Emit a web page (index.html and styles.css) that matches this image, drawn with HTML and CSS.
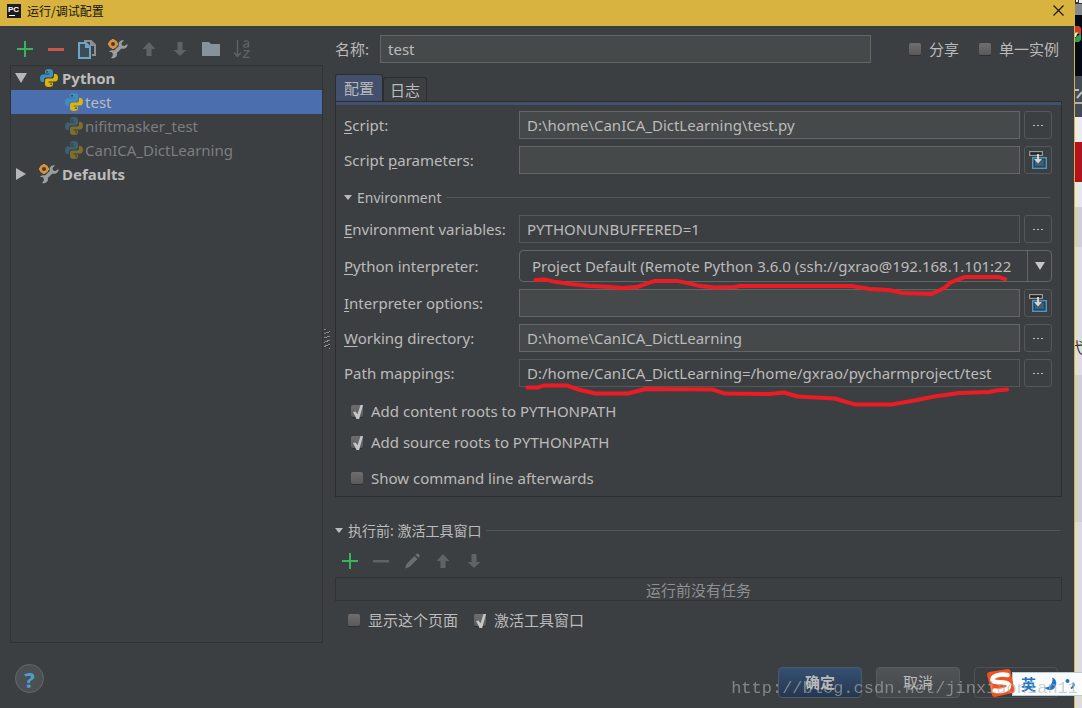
FILE: index.html
```html
<!DOCTYPE html>
<html lang="zh-CN">
<head>
<meta charset="utf-8">
<title>运行/调试配置</title>
<link rel="stylesheet" href="styles.css">
</head>
<body>
<svg class="defs" aria-hidden="true">
  <symbol id="python" viewBox="0 0 18 18">
    <path class="py-a" d="M9 0C6 0 5 1 5 2.500V4.500H9.500V5.500H3C1 5.500 0 7 0 9.300S1 13 2.500 13H4V10.800C4 9.300 5 8.500 6.500 8.500H11C12.300 8.500 13 7.500 13 6.300V2.500C13 1 12 0 9 0Z"/>
    <path class="py-b" d="M9 18C12 18 13 17 13 15.500V13.500H8.500V12.500H15C17 12.500 18 11 18 8.700S17 5 15.500 5H14V7.200C14 8.700 13 9.500 11.500 9.500H7C5.700 9.500 5 10.500 5 11.700V15.500C5 17 6 18 9 18Z"/>
    <path fill="#2b3d48" d="M6.300 2H7.800V3.500H6.300ZM10.300 14.600H11.800V16.100H10.300Z"/>
  </symbol>
  <symbol id="wrench" viewBox="0 0 20 20">
    <path fill="#9b9d9f" d="M19.500 5 16.500 7 14 6.500 13.500 4 16 1.500C13 .8 10.500 2.500 10.500 5.500L10.800 7 6 11.500C4 10.800 2 11.300 1 13L3.500 13 5 15 4.500 17 3 19C6 20 9.200 18 9 15L8.800 14 13.500 9.500C16.500 10.500 20 8.500 19.500 5Z"/>
    <circle cx="5" cy="5" r="3.300" fill="none" stroke="#d9923c" stroke-width="2.600"/>
    <path stroke="#d9923c" stroke-width="2" d="M5 0V1.500M5 8.500V10M0 5H1.500M8.500 5H10"/>
  </symbol>
  <symbol id="up" viewBox="0 0 16 16"><path fill="#606365" d="M8 1 14.500 8H10.500V15H5.500V8H1.500Z"/></symbol>
  <symbol id="down" viewBox="0 0 16 16"><path fill="#606365" d="M8 15 14.500 9H10.500V1H5.500V9H1.500Z"/></symbol>
  <symbol id="plus" viewBox="0 0 16 16"><path fill="#3bb357" d="M7 0H9V7H16V9H9V16H7V9H0V7H7Z"/></symbol>
  <symbol id="insert" viewBox="0 0 18 18">
    <rect x="3.700" y="6.700" width="13.600" height="10.600" fill="#2c4250" stroke="#4a9ac8" stroke-width="1.400"/>
    <rect x="6" y="9" width="9" height="6" fill="#3a6078"/>
    <rect x=".6" y=".6" width="12.800" height="3.800" fill="#222" stroke="#999" stroke-width="1.200"/>
    <path fill="#d4d4d4" d="M8 3H10V8H13L9 12.500 5 8H8Z"/>
  </symbol>
</svg>

<div class="screen">
  <main class="dialog">
    <header class="titlebar">
      <svg class="logo" viewBox="0 0 14 14" aria-hidden="true"><rect width="14" height="14" fill="#1c1c1c"/><text x="1" y="8" class="logo-text">PC</text><path fill="#fff" d="M2 11H8V12H2Z"/></svg>
      <h1>运行/调试配置</h1>
      <button class="close" aria-label="关闭"><svg viewBox="0 0 11 11"><path d="M.5.5 10.500 10.500M10.500.5.5 10.500" stroke="#1c1a10" stroke-width="1.200"/></svg></button>
    </header>

    <div class="content">
      <aside class="side">
        <div class="toolbar">
          <button aria-label="添加"><svg class="i16"><use href="#plus"/></svg></button>
          <button aria-label="删除"><svg class="i16" viewBox="0 0 16 16"><path fill="#cb5548" d="M0 7H16V10H0Z"/></svg></button>
          <button aria-label="复制"><svg class="i20" viewBox="0 0 20 20"><path fill="none" stroke="#8d9092" stroke-width="2" d="M7 2H14L18 6V16H15"/><path fill="#8d9092" d="M13 2V7H18Z"/><path fill="#3c4d58" stroke="#6da5c6" stroke-width="2" d="M2 4H9L13 8V19H2Z"/><path fill="#6da5c6" d="M8 4V9H13Z"/></svg></button>
          <button aria-label="编辑默认值"><svg class="i20"><use href="#wrench"/></svg></button>
          <button aria-label="上移" disabled><svg class="i16"><use href="#up"/></svg></button>
          <button aria-label="下移" disabled><svg class="i16"><use href="#down"/></svg></button>
          <button aria-label="新建文件夹"><svg class="i20" viewBox="0 0 20 20"><path fill="#87939a" d="M1 3H8L10 5H19V17H1Z"/></svg></button>
          <button aria-label="排序" disabled><svg class="i20" viewBox="0 0 20 20" fill="none" stroke="#606365" stroke-width="1.300"><path d="M5.500 1V17M2 13.500 5.500 17.500 9 13.500M12 2.800C13 1.600 16.500 1.400 16.500 3.800V8.500M16.500 5C13.500 4.800 11.600 5.300 11.600 6.800 11.600 8.900 15.500 8.500 16.500 6.500M11.500 11.700H17L11.500 18.300H17.500"/></svg></button>
        </div>
        <ul class="tree">
          <li class="node root"><svg class="arrow" viewBox="0 0 12 12"><path d="M0 1H12L6 11Z"/></svg><svg class="i18"><use href="#python"/></svg>Python</li>
          <li class="node leaf selected"><svg class="i18"><use href="#python"/></svg>test</li>
          <li class="node leaf dim"><svg class="i18"><use href="#python"/></svg>nifitmasker_test</li>
          <li class="node leaf dim"><svg class="i18"><use href="#python"/></svg>CanICA_DictLearning</li>
          <li class="node root"><svg class="arrow" viewBox="0 0 12 12"><path d="M1 0V12L11 6Z"/></svg><svg class="i20"><use href="#wrench"/></svg>Defaults</li>
        </ul>
      </aside>

      <div class="splitter"><span class="grip"></span></div>

      <section class="editor">
        <div class="namerow">
          <label for="name">名称:</label>
          <input id="name" class="field" type="text" value="test">
          <div class="flags">
            <label class="check"><input type="checkbox">分享</label>
            <label class="check"><input type="checkbox">单一实例</label>
          </div>
        </div>

        <div class="tabs" role="tablist">
          <button class="tab active" role="tab" aria-selected="true">配置</button>
          <button class="tab" role="tab" aria-selected="false">日志</button>
        </div>

        <div class="panel">
          <div class="form">
            <label for="script"><u>S</u>cript:</label>
            <input id="script" class="field" type="text" value="D:\home\CanICA_DictLearning\test.py">
            <button class="more" aria-label="浏览脚本"><i></i><i></i><i></i></button>

            <label for="params">Script <u>p</u>arameters:</label>
            <input id="params" class="field" type="text">
            <button class="more" aria-label="展开参数"><svg class="i18"><use href="#insert"/></svg></button>

            <h2 class="section env"><svg viewBox="0 0 8 6"><path d="M0 0H8L4 5Z"/></svg>Environment</h2>

            <label for="env"><u>E</u>nvironment variables:</label>
            <input id="env" class="field flat" type="text" value="PYTHONUNBUFFERED=1" readonly>
            <button class="more" aria-label="编辑环境变量"><i></i><i></i><i></i></button>

            <label for="interp"><u>P</u>ython interpreter:</label>
            <div class="combo">
              <select id="interp"><option>Project Default (Remote Python 3.6.0 (ssh://gxrao@192.168.1.101:22</option></select>
              <span class="drop"><svg viewBox="0 0 10 8"><path d="M0 0H10L5 8Z"/></svg></span>
            </div>

            <label for="opts"><u>I</u>nterpreter options:</label>
            <input id="opts" class="field" type="text">
            <button class="more" aria-label="展开选项"><svg class="i18"><use href="#insert"/></svg></button>

            <label for="wd"><u>W</u>orking directory:</label>
            <input id="wd" class="field" type="text" value="D:\home\CanICA_DictLearning">
            <button class="more" aria-label="浏览目录"><i></i><i></i><i></i></button>

            <label for="map">Path mappings:</label>
            <input id="map" class="field flat" type="text" value="D:/home/CanICA_DictLearning=/home/gxrao/pycharmproject/test" readonly>
            <button class="more" aria-label="编辑路径映射"><i></i><i></i><i></i></button>
          </div>
          <div class="options">
            <label class="check"><input type="checkbox" checked>Add content roots to PYTHONPATH</label>
            <label class="check"><input type="checkbox" checked>Add source roots to PYTHONPATH</label>
            <label class="check apart"><input type="checkbox">Show command line afterwards</label>
          </div>
          <svg class="marks" viewBox="335 101 727 396" preserveAspectRatio="none" aria-hidden="true">
            <path d="M535 280 545 279.500 556 282 570 284 590 286 610 287 622 288 637 287 645 284 654 281 678 281 688 283 700 286 715 287.500 735 287 740 286 852 286 870 289 890 290 903 293 932 294 945 288 952 282 965 277 1000 277 1006 279"/>
            <path d="M527 388 537 388 543 386 567 386 578 390 595 394 628 394 645 389.500 713 390 725 394 770 394.500 784 393 798 397 835 399 855 405 892 405 915 401 935 397 960 393.500 990 392.500 997 391 1008 390"/>
          </svg>
        </div>

        <h2 class="section before"><svg viewBox="0 0 8 6"><path d="M0 0H8L4 5Z"/></svg>执行前: 激活工具窗口</h2>
        <div class="toolbar tasks">
          <button aria-label="添加任务"><svg class="i16"><use href="#plus"/></svg></button>
          <button aria-label="删除任务" disabled><svg class="i16" viewBox="0 0 16 16"><path fill="#606365" d="M0 7H16V9.500H0Z"/></svg></button>
          <button aria-label="编辑任务" disabled><svg class="i16" viewBox="0 0 16 16"><path fill="#6b6e70" d="M1 15.500 2.500 11 10.500 3 13.500 6 5.500 14ZM11.500 2 13 .5C14.500 0 16.200 1.700 15.500 3.500L14.500 5Z"/></svg></button>
          <button aria-label="任务上移" disabled><svg class="i16"><use href="#up"/></svg></button>
          <button aria-label="任务下移" disabled><svg class="i16"><use href="#down"/></svg></button>
        </div>
        <div class="tasklist">运行前没有任务</div>
        <div class="shows">
          <label class="check"><input type="checkbox">显示这个页面</label>
          <label class="check"><input type="checkbox" checked>激活工具窗口</label>
        </div>
      </section>
    </div>

    <footer class="footer">
      <button class="help" aria-label="帮助">?</button>
      <div class="actions">
        <button class="btn primary">确定</button>
        <button class="btn">取消</button>
        <button class="btn ghost" aria-label="应用" disabled></button>
      </div>
    </footer>
  </main>

  <div class="backdrop" aria-hidden="true">
    <svg class="peek" viewBox="0 0 7 118"><path fill="#eee" d="M1 0H3V2H1ZM4 0H7V3H4Z"/><path fill="#d8392c" d="M0 26H4L6 28V34H0Z"/><path fill="#2ca04c" d="M0 38 6 33V40L4 42H0Z"/><path fill="#f2e8d8" d="M0 33 3 32 1 37H0Z"/><path stroke="#b8bcc0" stroke-width="2" d="M0 90H4M2 98 7 92"/></svg>
    <span class="glyph">弋</span>
  </div>
</div>

<div class="ime" aria-hidden="true">
  <svg class="sogou" viewBox="0 0 28 28"><path fill="#f0531f" d="M0 5.500Q0 3.500 2 3L21 0Q23 0 23.500 2L27.500 21Q28 23.500 25.500 24L8 28Q5.500 28 5 26Z"/><path fill="none" stroke="#fff" stroke-width="4.500" stroke-linecap="round" d="M20.500 6C13 4.500 5 7 5.500 11 6 15 21.500 11.500 22 16.500 22 21 13 23 7.500 21.500"/></svg>
  <span class="lang">英</span>
  <svg class="moon" viewBox="0 0 14 14"><path fill="#1f74c8" d="M9 0C14 2 14.500 8 11 11.500 8 14.500 3 14 0 10.500 5 11.500 10 7 9 0Z"/></svg>
  <svg class="punct" viewBox="0 0 10 12"><circle cx="2.500" cy="3" r="2" fill="#1f74c8"/><path fill="none" stroke="#1f74c8" stroke-width="2" d="M8 5C9.500 7 8.500 9 6 10.500"/></svg>
</div>
<div class="watermark">http://blog.csdn.net/jinxiaonian11</div>
</body>
</html>
```
FILE: styles.css
```css
* { box-sizing: border-box; }

body {
  margin: 0;
  background: #3c3f41;
  color: #bbbbbb;
  font: 15px/24px "Noto Sans", "Noto Sans CJK SC", sans-serif;
}

button, input, select { font: inherit; color: inherit; margin: 0; }
button { padding: 0; border: 0; background: none; }
h1, h2 { margin: 0; font-weight: 400; }
svg { display: block; flex: none; }
u { text-underline-offset: 2px; }

.defs { position: absolute; width: 0; height: 0; }
.i16 { width: 16px; height: 16px; }
.i18 { width: 18px; height: 18px; }
.i20 { width: 20px; height: 20px; }
.py-a { fill: #3d8fbc; }
.py-b { fill: #dcb410; }

.screen {
  display: grid;
  grid-template-columns: minmax(0, 1fr) 7px;
  min-height: 100vh;
}

.dialog {
  display: flex;
  flex-direction: column;
  border-right: 1px solid #d9b340;
}

.titlebar {
  display: flex;
  align-items: center;
  gap: 6px;
  height: 26px;
  padding: 0 10px 5px 7px;
  background: #d9b340;
  color: #15130a;
}
.titlebar h1 { flex: 1; font: 12px/16px "Noto Sans CJK SC", sans-serif; }
.logo { width: 14px; height: 14px; }
.logo-text { font: bold 8px "Liberation Sans", sans-serif; fill: #fff; }
.close svg { width: 11px; height: 11px; }

.content {
  flex: 1;
  display: grid;
  grid-template-columns: 313px 12px minmax(0, 1fr);
  padding: 9px 12px 0 10px;
}

.side { display: flex; flex-direction: column; }

.toolbar {
  display: flex;
  align-items: center;
  gap: 11px;
  height: 28px;
  margin-bottom: 2px;
  padding-left: 5px;
}
.toolbar button {
  display: flex;
  align-items: center;
  justify-content: center;
  width: 20px;
  height: 20px;
}

.tree {
  flex: 1;
  margin: 0;
  padding: 0;
  list-style: none;
  border: 1px solid #303234;
}
.node { display: flex; align-items: center; height: 24px; }
.root { gap: 4px; padding-left: 4px; font-weight: 700; }
.arrow { width: 12px; height: 12px; margin-right: 9px; fill: #b4b6b8; }
.root .i20 { margin: 0 -1px; }
.leaf { gap: 2px; padding-left: 54px; }
.selected { background: #4b6eaf; }
.dim { color: #7c7e80; }
.dim svg { opacity: 0.4; }

.splitter { display: flex; align-items: center; }
.grip {
  width: 6px;
  height: 20px;
  margin-left: 1px;
  background: repeating-linear-gradient(160deg, #8a8c8e 0 1px, #303234 1px 2px, #3c3f41 2px 4px);
}

.namerow { display: flex; align-items: center; height: 28px; }
.namerow > label { width: 45px; }
.namerow .field { flex: 1; }
.flags { display: flex; gap: 20px; padding: 0 3px 0 38px; }

.field {
  width: 100%;
  min-width: 0;
  height: 28px;
  padding: 0 7px;
  border: 1px solid #646666;
  border-radius: 0;
  background: #45494a;
  outline: 0;
}
.flat { background: #3c3f41; border-color: #555758; }

.check { display: flex; align-items: center; gap: 8px; }
.check input {
  appearance: none;
  flex: none;
  width: 12px;
  height: 12px;
  border-radius: 2px;
  background: linear-gradient(#6e6e6e, #5a5a5a);
  box-shadow: 0 1px 0 #2c2e30;
}
.check input:checked::before {
  content: "";
  display: block;
  width: 12px;
  height: 14px;
  background: #c4c6c8;
  clip-path: polygon(17% 50%, 38% 46%, 54% 66%, 80% 0, 100% 0, 68% 100%, 46% 100%);
}

.tabs { display: flex; align-items: flex-end; margin-top: 11px; }
.tab {
  height: 24px;
  padding: 0 6px;
  border: 1px solid #2b2d2f;
  border-bottom: 0;
  border-radius: 3px 3px 0 0;
}
.tab.active { height: 27px; padding: 0 8px; background: #42506e; }

.panel {
  position: relative;
  padding: 6px 9px 6px 8px;
  border: 1px solid #2b2d2f;
  box-shadow: inset 0 3px 0 #42506e;
}
.form {
  display: grid;
  grid-template-columns: 171px minmax(0, 1fr) 28px;
  gap: 7px 4px;
  align-items: center;
  padding-top: 3px;
}

.more {
  display: flex;
  align-items: center;
  justify-content: center;
  gap: 2px;
  height: 28px;
  border: 1px solid #55585a;
  border-radius: 3px;
}
.more i { width: 2px; height: 1px; background: #bbbbbb; }

.section {
  grid-column: 1 / -1;
  display: flex;
  align-items: center;
  gap: 5px;
  height: 27px;
  font-size: 14px;
}
.section::after { content: ""; flex: 1; height: 1px; margin-right: 2px; background: #515456; }
.section svg { width: 8px; height: 6px; fill: #bbbbbb; }
.env { padding-top: 6px; }

.combo {
  grid-column: 2 / -1;
  display: flex;
  height: 32px;
  border: 1px solid #646666;
  border-radius: 4px;
}
.combo select {
  appearance: none;
  flex: 1;
  min-width: 0;
  padding: 0 3px 0 12px;
  border: 0;
  background: none;
  outline: 0;
}
.drop {
  display: flex;
  align-items: center;
  justify-content: center;
  width: 24px;
  border-left: 1px solid #646666;
}
.drop svg { width: 10px; height: 8px; fill: #c4c6c8; }

.options {
  display: flex;
  flex-direction: column;
  align-items: flex-start;
  gap: 7px;
  padding: 12px 0 0 7px;
}
.apart { margin-top: 5px; }

.marks {
  position: absolute;
  inset: 0;
  width: 100%;
  height: 100%;
  pointer-events: none;
  fill: none;
  stroke: #ed1c24;
  stroke-width: 4px;
  stroke-linecap: round;
  stroke-linejoin: round;
}

.before { margin-top: 20px; }
.tasks { height: 28px; margin: 3px 0 2px; }
.tasklist {
  height: 24px;
  border: 1px solid #303234;
  color: #8e9092;
  text-align: center;
  line-height: 24px;
}
.shows { display: flex; gap: 16px; padding: 7px 0 0 13px; }

.footer {
  display: flex;
  align-items: flex-end;
  justify-content: space-between;
  padding: 21px 16px 10px 15px;
}
.help {
  width: 29px;
  height: 29px;
  margin-bottom: 5px;
  border: 1px solid #65696b;
  border-radius: 50%;
  background: #4c5052;
  color: #4b9fd0;
  font: 700 22px/26px "Noto Sans", sans-serif;
}
.actions { display: flex; gap: 14px; }
.btn {
  width: 84px;
  height: 31px;
  padding-bottom: 2px;
  border: 1px solid #5a5d5f;
  border-radius: 4px;
  background: linear-gradient(#505456, #434749);
}
.primary { background: linear-gradient(#365073, #25374f); border-color: #4a5a70; font-weight: 700; }
.ghost { background: none; border-color: #505355; }

.backdrop {
  overflow: hidden;
  background: linear-gradient(#333 0 4px, #87898c 4px 15px, #020b14 15px 76px, #434b55 76px 102px, #b0b0b0 102px 104px, #414b57 104px 117px, #ececec 117px 142px, #b5131c 142px 182px, #e8e8e8 182px 207px, #d0d0d0 207px 247px, #dedede 247px 375px, #d0d0d0 375px 522px, #dcdcdc 522px);
}
.peek { width: 7px; height: 118px; }
.glyph { display: block; margin: 217px 0 0 -5px; color: #333; }

.ime {
  position: fixed;
  right: 0;
  bottom: 12px;
  display: flex;
  align-items: center;
  gap: 8px;
  width: 70px;
  height: 24px;
  padding-left: 8px;
  background: #fafcfe;
  border: 1px solid #b8cce0;
  border-right: 0;
}
.sogou { position: absolute; left: -26px; top: -4px; width: 28px; height: 28px; }
.lang { color: #1f74c8; font: 700 15px/22px "Noto Sans CJK SC", sans-serif; }
.moon { width: 13px; height: 14px; }
.punct { width: 10px; height: 12px; }

.watermark {
  position: fixed;
  right: 4px;
  bottom: 7px;
  color: rgba(176, 180, 176, 0.6);
  font: 17px/24px "Liberation Mono", monospace;
  pointer-events: none;
}
```
